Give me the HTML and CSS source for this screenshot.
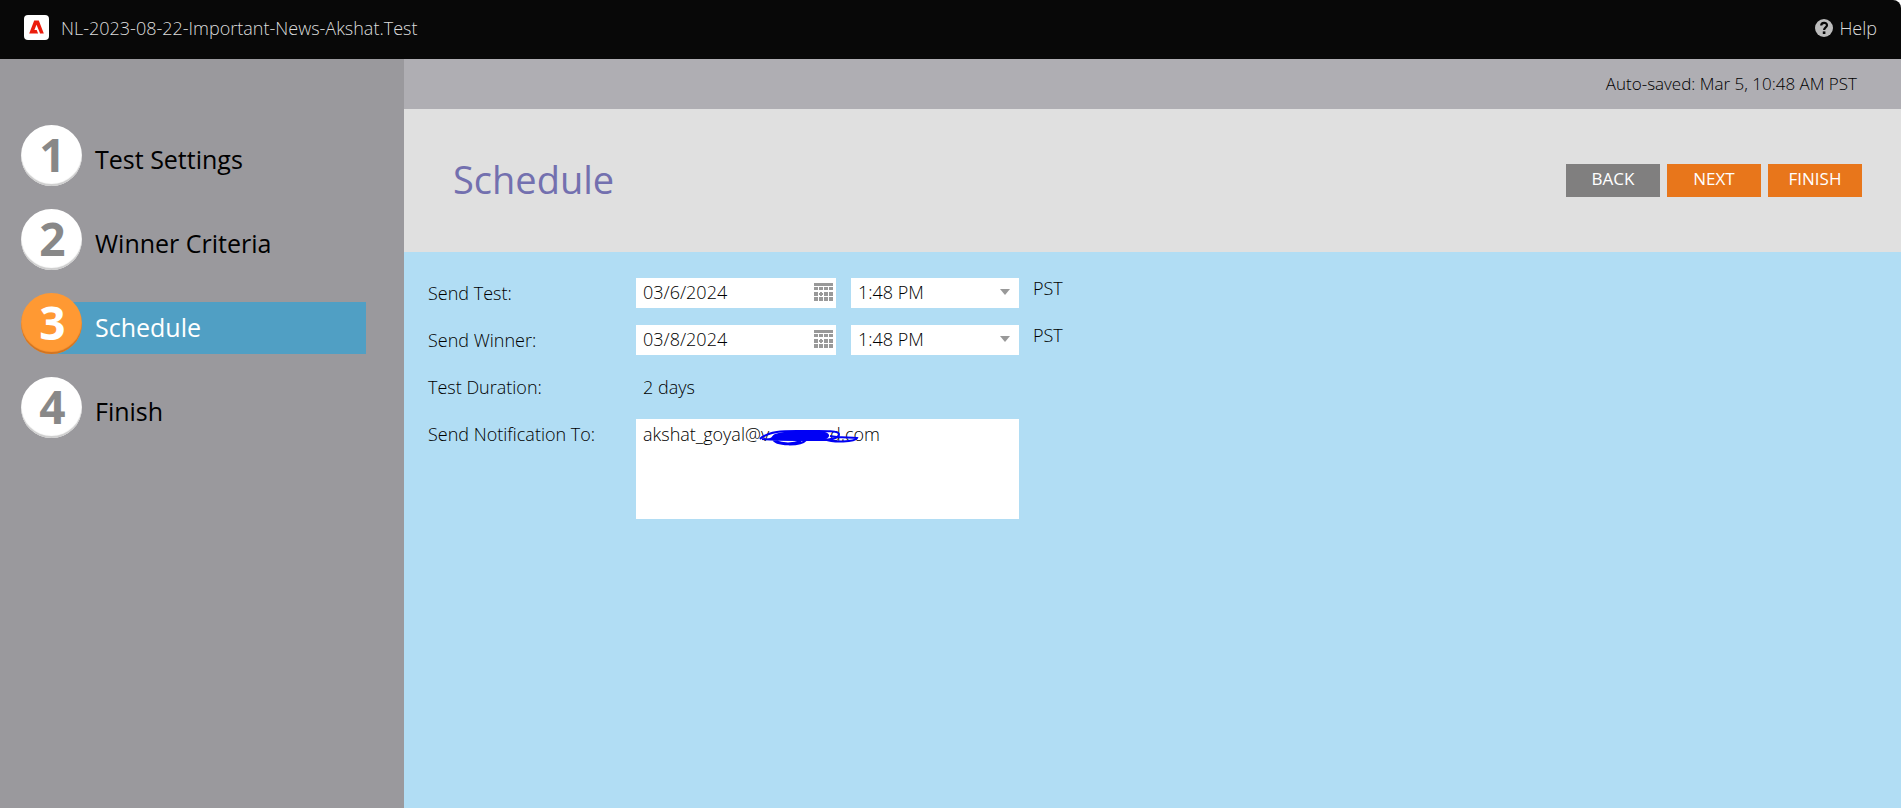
FILE: index.html
```html
<!DOCTYPE html>
<html lang="en">
<head>
    <meta charset="UTF-8">
    <meta name="viewport" content="width=device-width, initial-scale=1.0">
    <title>NL-2023-08-22-Important-News-Akshat.Test</title>
    <link rel="stylesheet" href="styles.css">
</head>
<body>
    <header class="topbar">
        <svg class="logo" viewBox="0 0 25 25" aria-hidden="true">
            <rect width="25" height="25" rx="4" fill="#fff"/>
            <path d="M10.2 5.5h4.6l5 13h-3.7l-1.5-3.8-2.1-4.9-2.1 5.3h2.3l1.4 3.4H5.2z" fill="#eb1c0c"/>
        </svg>
        <span class="test-name">NL-2023-08-22-Important-News-Akshat.Test</span>
        <a class="help" href="#help">
            <svg class="help-icon" viewBox="0 0 18 18" aria-hidden="true">
                <circle cx="9" cy="9" r="9" fill="#bcbcbc"/>
                <path d="M6.2 6.6c0-3.6 5.8-3.6 5.8-.3 0 2.2-2.9 2-2.9 4.7" fill="none" stroke="#080808" stroke-width="2.2"/>
                <rect x="7.8" y="12.4" width="2.6" height="2.6" fill="#080808"/>
            </svg>
            Help
        </a>
    </header>

    <div class="layout">
        <nav class="steps">
            <a class="step" href="#settings"><span class="badge">1</span><span class="step-name">Test Settings</span></a>
            <a class="step" href="#criteria"><span class="badge">2</span><span class="step-name">Winner Criteria</span></a>
            <a class="step active" href="#schedule"><span class="badge">3</span><span class="step-name">Schedule</span></a>
            <a class="step" href="#finish"><span class="badge">4</span><span class="step-name">Finish</span></a>
        </nav>

        <main class="content">
            <div class="saved">Auto-saved: Mar 5, 10:48 AM PST</div>

            <div class="title-bar">
                <h1>Schedule</h1>
                <div class="buttons">
                    <button class="button back" type="button">BACK</button>
                    <button class="button" type="button">NEXT</button>
                    <button class="button" type="button">FINISH</button>
                </div>
            </div>

            <form class="form">
                <div class="row">
                    <label class="label" for="testDate">Send Test:</label>
                    <div class="date">
                        <input class="field" type="text" id="testDate" value="03/6/2024">
                        <svg class="calendar" viewBox="0 0 19 18" aria-hidden="true"><use href="#calendar"/></svg>
                    </div>
                    <div class="time">
                        <select class="field" id="testTime" aria-label="Send test time"><option>1:48 PM</option></select>
                        <svg class="arrow" viewBox="0 0 10 6" aria-hidden="true"><path d="M0 0h10L5 6z"/></svg>
                    </div>
                    <span class="zone">PST</span>
                </div>
                <div class="row">
                    <label class="label" for="winnerDate">Send Winner:</label>
                    <div class="date">
                        <input class="field" type="text" id="winnerDate" value="03/8/2024">
                        <svg class="calendar" viewBox="0 0 19 18" aria-hidden="true"><use href="#calendar"/></svg>
                    </div>
                    <div class="time">
                        <select class="field" id="winnerTime" aria-label="Send winner time"><option>1:48 PM</option></select>
                        <svg class="arrow" viewBox="0 0 10 6" aria-hidden="true"><path d="M0 0h10L5 6z"/></svg>
                    </div>
                    <span class="zone">PST</span>
                </div>
                <div class="row">
                    <span class="label">Test Duration:</span>
                    <span class="value">2 days</span>
                </div>
                <div class="row">
                    <label class="label" for="notify">Send Notification To:</label>
                    <div class="notify">
                        <textarea class="field" id="notify" spellcheck="false">akshat_goyal@v&nbsp;&nbsp;&nbsp;&nbsp;&nbsp;&nbsp;&nbsp;&nbsp;&nbsp;&nbsp;&nbsp;&nbsp;&nbsp;d.com</textarea>
                        <!-- pen strokes over the mail domain -->
                        <svg class="scribble" viewBox="0 0 100 18" aria-hidden="true">
                            <path d="M16 5C28 1 50 1 66 3c6 2 5 6 0 7-12 2-40 2-58 0 6-1 4-3 8-5z" fill="#0000f5" stroke="none"/>
                            <path d="M1 10C10 1 28 2 44 2s36-1 36 3-8 6-18 6S14 11 3 10M14 10c2 7 28 7 33 1M66 10c8 4 30 3 32-1-6-1-18 0-27-2M16 12c8 3 18 3 26 0"/>
                        </svg>
                    </div>
                </div>
            </form>
        </main>
    </div>

    <svg class="symbols" aria-hidden="true">
        <symbol id="calendar" viewBox="0 0 19 18">
            <path fill="#999" d="M0 0h19v3H0zM0 4h4v3H0zM5 4h4v3H5zM10 4h4v3h-4zM15 4h4v3h-4zM0 9h4v4H0zM10 9h4v4h-4zM15 9h4v4h-4zM0 14h4v4H0zM5 14h4v4H5zM10 14h4v4h-4zM15 14h4v4h-4zM6 9h2v1h1v2H8v1H6v-1H5v-2h1z"/>
        </symbol>
    </svg>
</body>
</html>
```
FILE: styles.css
```css
:root {
    --orange: #e8761b;
    --sidebar: #9a999d;
    --blue: #b1ddf4;
}

* {
    box-sizing: border-box;
    margin: 0;
    padding: 0;
    font-family: 'Open Sans', 'Noto Sans', sans-serif;
}

body {
    display: flex;
    flex-direction: column;
    min-height: 100vh;
    background: #fff;
    color: #000;
    font-size: 18px;
    font-weight: 300;
    line-height: 24px;
}

.topbar {
    display: flex;
    align-items: center;
    height: 59px;
    padding: 0 24px 4px 24px;
    background: #080808;
    border-top-right-radius: 8px;
    color: #dcdcdc;
}

.logo {
    width: 25px;
    height: 25px;
    margin-right: 12px;
}

.help {
    display: flex;
    align-items: center;
    gap: 6px;
    margin-left: auto;
    color: inherit;
    text-decoration: none;
}

.help-icon {
    width: 18px;
    height: 18px;
}

.layout {
    display: flex;
    flex: 1;
}

.steps {
    display: flex;
    flex-direction: column;
    gap: 23px;
    width: 404px;
    padding: 66px 38px 0 21px;
    background: var(--sidebar);
}

.step {
    display: flex;
    align-items: center;
    height: 61px;
    color: #000;
    font-size: 25px;
    font-weight: 400;
    text-decoration: none;
}

.badge {
    flex: none;
    width: 61px;
    height: 61px;
    padding-left: 2px;
    border-radius: 50%;
    background: #fff;
    box-shadow: inset 0 -2px 1px #ccc;
    color: #888;
    font-size: 46px;
    font-weight: 700;
    line-height: 59px;
    text-align: center;
    z-index: 1;
}

.step-name {
    flex: 1;
    align-self: flex-end;
    height: 52px;
    margin-left: -31px;
    padding-left: 44px;
    line-height: 50px;
}

.active .step-name {
    background: #509fc4;
    color: #fff;
}

.active .badge {
    background: #ff9933;
    box-shadow: inset 0 -2px 1px #cf7322;
    color: #fff;
}

.content {
    display: flex;
    flex: 1;
    flex-direction: column;
    background: var(--blue);
}

.saved {
    padding: 13px 44px 13px 0;
    background: #afaeb3;
    font-size: 17px;
    text-align: right;
}

.title-bar {
    display: flex;
    align-items: center;
    justify-content: space-between;
    height: 143px;
    padding: 0 39px 0 49px;
    background: #e0e0e0;
}

h1 {
    padding-bottom: 3px;
    color: #7370af;
    font-size: 38px;
    font-weight: 400;
    line-height: 54px;
}

.buttons {
    display: flex;
    gap: 7px;
}

.button {
    width: 94px;
    height: 33px;
    padding-bottom: 3px;
    border: none;
    background: var(--orange);
    color: #fff;
    cursor: pointer;
    font-size: 17px;
    line-height: 30px;
}

.back {
    background: #807f7f;
}

.form {
    display: flex;
    flex-direction: column;
    gap: 17px;
    padding: 26px 24px;
}

.row {
    display: flex;
    min-height: 30px;
}

.label {
    width: 208px;
    padding-top: 3px;
}

.date,
.time,
.notify {
    position: relative;
    height: 30px;
}

.date {
    width: 200px;
    margin-right: 15px;
}

.time {
    width: 168px;
}

.notify {
    width: 383px;
    height: 100px;
}

.field {
    display: block;
    width: 100%;
    height: 100%;
    padding: 0 7px 2px;
    border: none;
    border-radius: 0;
    outline: none;
    background: #fff;
    color: #000;
    font-size: 18px;
    font-weight: 300;
    line-height: 24px;
    appearance: none;
    resize: none;
}

textarea.field {
    padding-top: 3px;
}

.calendar {
    position: absolute;
    top: 5px;
    right: 3px;
    width: 19px;
    height: 18px;
}

.arrow {
    position: absolute;
    top: 11px;
    right: 9px;
    width: 10px;
    height: 6px;
    fill: #999;
    pointer-events: none;
}

.zone {
    margin-top: -2px;
    padding-left: 14px;
}

.value {
    padding: 3px 7px 0;
}

.scribble {
    position: absolute;
    top: 10px;
    left: 123px;
    width: 100px;
    height: 18px;
    fill: none;
    stroke: #0000f5;
    stroke-width: 2;
    pointer-events: none;
}

.symbols {
    display: none;
}
```
